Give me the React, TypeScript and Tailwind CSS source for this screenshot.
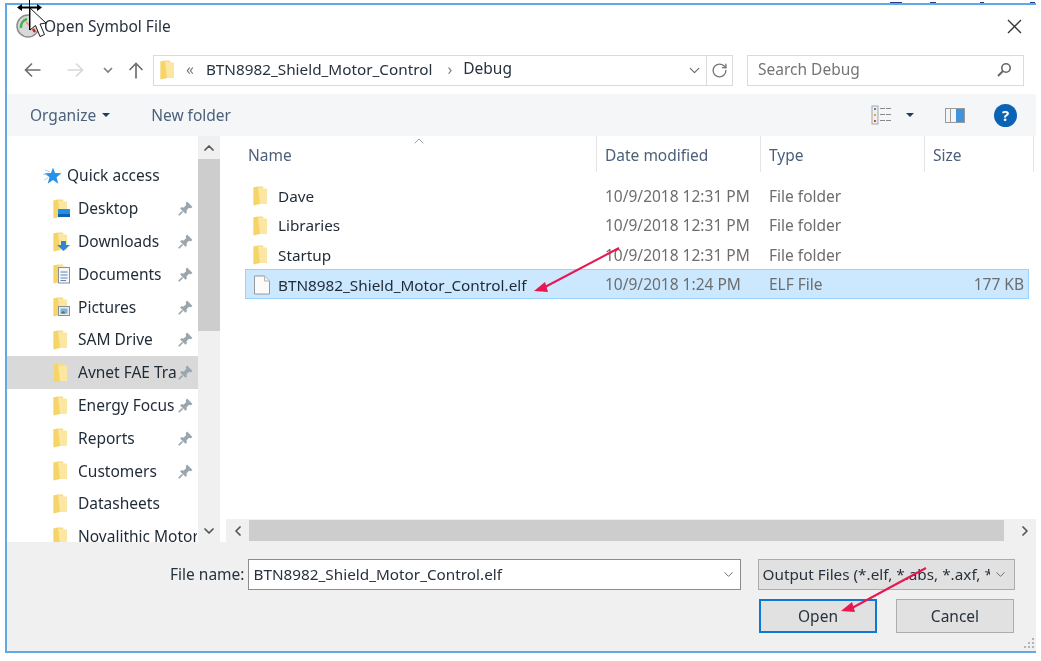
import React from "react";
import { ChevronDown, ChevronUp, ChevronLeft, ChevronRight, RotateCw } from "lucide-react";

function Folder({ overlay }: { overlay?: React.ReactNode }) {
  return (
    <svg width="20" height="20" viewBox="0 0 20 20" className="shrink-0">
      <path d="M0.5 1.5 L5 0.5 L5.5 2.5 L14 2.5 L14 18 L1.5 18 L0.5 19.5 Z" fill="#fbe6a2" />
      <path d="M0.5 1.5 L5 0.5 L7 18 L0.5 19.5 Z" fill="#f5d469" />
      <path d="M5 0.5 L10 0.5 L10.5 2.5 L5.4 2.5 Z" fill="#f7dc85" />
      {overlay}
    </svg>
  );
}

const desktop = (
  <g>
    <rect x="5" y="10" width="12" height="8" rx="0.5" fill="#1f8fe8" />
    <rect x="5" y="15" width="12" height="3" fill="#0d62b0" />
  </g>
);
const downloads = <path d="M8 9 H13 V13 H17 L10.5 19 L4 13 H8 Z" fill="#2e86dc" />;
const documents = (
  <g>
    <rect x="5.5" y="3.5" width="11" height="15.5" fill="#f5f7fa" stroke="#8b8f94" />
    <path d="M7.5 8 H14.5 M7.5 11 H14.5 M7.5 14 H14.5 M7.5 16.5 H13" stroke="#5a87b5" strokeWidth="1" />
  </g>
);
const pictures = (
  <g>
    <rect x="5.5" y="9.5" width="11" height="9" fill="#e9edf0" stroke="#8b8f94" />
    <rect x="7.5" y="11.5" width="7" height="5" fill="#7fb2d9" />
    <path d="M7.5 16.5 L10 14 L13 16.5 Z" fill="#4f7b50" />
  </g>
);

function Pin() {
  return (
    <svg width="15" height="15" viewBox="0 0 14 14" className="shrink-0">
      <path d="M8.5 0.5 L13.5 5.5 L12 6.8 L10.3 6.3 L8 8.6 L8.2 11 L7 12 L2 7 L3 5.8 L5.4 6 L7.7 3.7 L7.2 2 Z" fill="#9aa5ad" />
      <path d="M4.2 9.8 L0.7 13.3" stroke="#9aa5ad" strokeWidth="1.6" />
    </svg>
  );
}

function NavRow({ label, pin, active, overlay }: { label: string; pin?: boolean; active?: boolean; overlay?: React.ReactNode }) {
  return (
    <div className={`flex h-[32.8px] shrink-0 items-center pl-[46px] ${active ? "bg-[#d9d9d9]" : ""}`}>
      <Folder overlay={overlay} />
      <span className={`ml-[5px] overflow-hidden whitespace-nowrap text-[#1f2a36] ${pin ? "w-[98px]" : "w-[119px]"}`}>{label}</span>
      {pin && <span className="ml-[2px] flex"><Pin /></span>}
    </div>
  );
}

function FileRow({ name, date, type, size, selected, file }: { name: string; date: string; type: string; size?: string; selected?: boolean; file?: boolean }) {
  return (
    <div className={`flex w-[784px] items-center border pl-[7px] pt-[2px] ${selected ? "h-[30px] border-[#99d1ff] bg-[#cce8ff]" : "h-[29.5px] border-transparent"}`}>
      {file ? (
        <svg width="20" height="20" viewBox="0 0 20 20" className="shrink-0">
          <path d="M1.5 1 H11.5 L16.5 6 V19 H1.5 Z" fill="#fbfbfb" stroke="#9a9a9a" />
          <path d="M11.5 1 V6 H16.5" fill="#eeeeee" stroke="#b5b5b5" />
        </svg>
      ) : (
        <Folder />
      )}
      <span className="ml-[5px] w-[327px] whitespace-nowrap text-[15.3px] text-[#1f2a36]">{name}</span>
      <span className="w-[164px] whitespace-nowrap text-[#6d6d6d]">{date}</span>
      <span className="w-[130px] whitespace-nowrap text-[#6d6d6d]">{type}</span>
      <span className="w-[129px] whitespace-nowrap pr-[4px] text-right text-[#6d6d6d]">{size}</span>
    </div>
  );
}

function Header({ label, w, first }: { label: string; w: string; first?: boolean }) {
  return (
    <div className={`h-[36px] shrink-0 border-r border-[#e5e5e5] pt-[7px] leading-[24px] text-[#4c607a] ${first ? "pl-[7px]" : "pl-[8px]"} ${w}`}>{label}</div>
  );
}

export default function App() {
  return (
    <div className="relative h-[661px] w-[1041px] overflow-hidden bg-white pl-[5px] pt-[3px] text-[15.5px] blur-[0.35px]" style={{ fontFamily: '"Noto Sans", "Open Sans", sans-serif' }}>
      {/* window edges peeking out behind the dialog */}
      <div className="absolute left-[890px] top-[2px] h-[2px] w-[12px] bg-[#1f3f8f]" />
      <div className="absolute left-[930px] top-[2px] h-[2px] w-[6px] bg-[#1f3f8f]" />
      <div className="absolute left-[980px] top-[2px] h-[2px] w-[4px] bg-[#1f3f8f]" />
      <div className="absolute left-[1030px] top-[2px] h-[2px] w-[5px] bg-[#1f3f8f]" />

      <div className="relative flex h-[650px] w-[1031px] flex-col border-y-2 border-l-2 border-[#62a8e5] bg-white">
        {/* title */}
        <div className="flex h-[41px] shrink-0 items-center pl-[9px] pt-[1px]">
          <svg width="24" height="24" viewBox="0 0 24 24" className="shrink-0">
            <circle cx="12" cy="12" r="11" fill="#d9d9d9" stroke="#8c8c8c" strokeWidth="1.5" />
            <path d="M5 14 A8 8 0 0 1 11 5" fill="none" stroke="#43b649" strokeWidth="2.5" />
            <path d="M14 6 A8 8 0 0 1 19 10" fill="none" stroke="#e8e8e8" strokeWidth="2.5" />
            <path d="M10 8 L15 13" stroke="#e78b8b" strokeWidth="1.5" />
            <path d="M17 15 L19 18" stroke="#c22" strokeWidth="2.5" />
          </svg>
          <span className="ml-[4px] pt-[2px] text-[#27323e]">Open Symbol File</span>
          <svg width="15" height="15" viewBox="0 0 15 15" className="ml-auto mr-[14px]">
            <path d="M1 1 L14 14 M14 1 L1 14" stroke="#333" strokeWidth="1.3" />
          </svg>
        </div>

        {/* nav */}
        <div className="flex h-[48px] shrink-0 items-center pl-[17px]">
          <svg width="17" height="16" viewBox="0 0 17 16" className="shrink-0">
            <path d="M16.5 8 H1.5 M8 1.5 L1.5 8 L8 14.5" fill="none" stroke="#707070" strokeWidth="1.7" />
          </svg>
          <svg width="17" height="16" viewBox="0 0 17 16" className="ml-[26px] shrink-0">
            <path d="M0.5 8 H15.5 M9 1.5 L15.5 8 L9 14.5" fill="none" stroke="#d9d9d9" strokeWidth="1.7" />
          </svg>
          <svg width="10" height="7" viewBox="0 0 10 7" className="ml-[19px] shrink-0">
            <path d="M1 1 L5 5 L9 1" fill="none" stroke="#808080" strokeWidth="1.7" />
          </svg>
          <svg width="16" height="17" viewBox="0 0 16 17" className="ml-[15px] shrink-0">
            <path d="M8 16.5 V1.5 M1.5 8 L8 1.5 L14.5 8" fill="none" stroke="#707070" strokeWidth="1.7" />
          </svg>
          <div className="ml-[9px] flex h-[31px] w-[580px] shrink-0 items-center border border-[#dadada]">
            <div className="ml-[6px] flex"><Folder /></div>
            <span className="ml-[6px] text-[#7a7a7a]">«</span>
            <span className="ml-[12px] pb-[2px] text-[15.3px] text-[#27323e]">BTN8982_Shield_Motor_Control</span>
            <span className="ml-[15px] text-[#7a7a7a]">›</span>
            <span className="ml-[11px] pb-[2px] text-[#27323e]">Debug</span>
            <ChevronDown size={17} strokeWidth={1.6} className="ml-auto mr-[3px] text-[#666]" />
            <div className="flex h-full w-[26px] items-center justify-center border-l border-[#dadada]">
              <RotateCw size={17} strokeWidth={1.9} className="text-[#777]" />
            </div>
          </div>
          <div className="ml-[14px] flex h-[31px] w-[277px] shrink-0 items-center border border-[#dadada] pl-[10px] pr-[11px] text-[#757575]">
            Search Debug
            <svg width="16" height="16" viewBox="0 0 16 16" className="ml-auto">
              <circle cx="10" cy="6" r="4.2" fill="none" stroke="#666" strokeWidth="1.6" />
              <path d="M7 9 L2 14" stroke="#666" strokeWidth="2" />
            </svg>
          </div>
        </div>

        {/* toolbar */}
        <div className="flex h-[42px] shrink-0 items-center bg-[#f4f6f8] pl-[23px] text-[#4c607a]">
          <span className="pt-[2px]">Organize</span>
          <span className="ml-[6px] h-0 w-0 border-x-[4px] border-t-[4px] border-x-transparent border-t-[#1e3a5f]" />
          <span className="ml-[41px] pt-[2px]">New folder</span>
          <svg width="22" height="20" viewBox="0 0 22 20" className="ml-auto">
            <rect x="1" y="1" width="6" height="18" fill="#f0f0f0" stroke="#a6a6a6" />
            <rect x="3" y="3" width="2" height="2" fill="#4f86c6" />
            <rect x="3" y="9" width="2" height="2" fill="#c9b23a" />
            <rect x="3" y="15" width="2" height="2" fill="#d0502c" />
            <path d="M9 3.5 H21 M9 9.5 H21 M9 15.5 H21" stroke="#8a8a8a" strokeDasharray="5 1" />
          </svg>
          <span className="ml-[13px] h-0 w-0 border-x-[4px] border-t-[4px] border-x-transparent border-t-[#1e3a5f]" />
          <svg width="20" height="15" viewBox="0 0 20 15" className="ml-[31px]">
            <rect x="0.5" y="0.5" width="19" height="14" fill="#f5f5f5" stroke="#9a9a9a" />
            <rect x="11" y="1" width="8" height="13" fill="#3f94dd" />
            <rect x="5" y="1" width="1" height="13" fill="#9a9a9a" />
          </svg>
          <div className="ml-[29px] mr-[19px] flex h-[23px] w-[23px] items-center justify-center rounded-full bg-[#0a63b5] text-[15px] font-bold text-white">?</div>
        </div>

        {/* main */}
        <div className="flex min-h-0 flex-1">
          {/* sidebar */}
          <div className="w-[191px] shrink-0 overflow-hidden">
            <div className="flex h-[56.4px] items-start pl-[35px] pt-[28px]">
              <svg width="20" height="18" viewBox="0 0 20 18" className="mt-[3px] shrink-0">
                <path d="M11 0.5 L13 6 L19.5 6.3 L14.5 10.3 L16.3 16.8 L11 13 L5.7 16.8 L7.5 10.3 L2.5 6.3 L9 6 Z" fill="#2b90e8" />
                <path d="M3 3 L8 5 M1 7 L5 8 M2 13 L6 11" stroke="#a8d4f5" strokeWidth="1" />
              </svg>
              <span className="ml-[5px] text-[#1f2a36]">Quick access</span>
            </div>
            <NavRow label="Desktop" pin overlay={desktop} />
            <NavRow label="Downloads" pin overlay={downloads} />
            <NavRow label="Documents" pin overlay={documents} />
            <NavRow label="Pictures" pin overlay={pictures} />
            <NavRow label="SAM Drive" pin />
            <NavRow label="Avnet FAE Training" pin active />
            <NavRow label="Energy Focus" pin />
            <NavRow label="Reports" pin />
            <NavRow label="Customers" pin />
            <NavRow label="Datasheets" />
            <NavRow label="Novalithic Motor Control" />
          </div>
          {/* sidebar scroll */}
          <div className="flex h-full w-[22px] shrink-0 flex-col bg-[#f0f0f0]">
            <div className="flex h-[23px] items-center justify-center"><ChevronUp size={16} strokeWidth={2.6} className="text-[#555]" /></div>
            <div className="h-[172px] bg-[#cdcdcd]" />
            <div className="flex-1" />
            <div className="flex h-[23px] items-center justify-center"><ChevronDown size={16} strokeWidth={2.6} className="text-[#555]" /></div>
          </div>
          {/* file list */}
          <div className="relative flex min-w-0 flex-1 flex-col">
            <ChevronUp size={16} strokeWidth={1.2} className="absolute left-[191px] top-[-3px] text-[#888]" />
            <div className="flex shrink-0 pl-[21px]">
              <Header label="Name" w="w-[356px]" first />
              <Header label="Date modified" w="w-[164px]" />
              <Header label="Type" w="w-[164px]" />
              <Header label="Size" w="w-[109px]" />
            </div>
            <div className="flex-1 pl-[25px] pt-[8.5px]">
              <FileRow name="Dave" date="10/9/2018 12:31 PM" type="File folder" />
              <FileRow name="Libraries" date="10/9/2018 12:31 PM" type="File folder" />
              <FileRow name="Startup" date="10/9/2018 12:31 PM" type="File folder" />
              <FileRow name="BTN8982_Shield_Motor_Control.elf" date="10/9/2018 1:24 PM" type="ELF File" size="177 KB" selected file />
            </div>
            <div className="ml-[6px] flex h-[23px] shrink-0 items-center bg-[#f0f0f0]">
              <div className="flex w-[23px] shrink-0 justify-center"><ChevronLeft size={16} strokeWidth={2.6} className="text-[#555]" /></div>
              <div className="h-[21px] w-[755px] shrink-0 bg-[#cdcdcd]" />
              <div className="flex w-[32px] shrink-0 justify-center pl-[10px]"><ChevronRight size={16} strokeWidth={2.6} className="text-[#555]" /></div>
            </div>
          </div>
        </div>

        {/* bottom */}
        <div className="flex h-[109px] shrink-0 flex-col bg-[#f0f0f0] pt-[17px]">
          <div className="flex items-center">
            <span className="ml-[163px] text-[#27323e]">File name:</span>
            <div className="ml-[4px] flex h-[31px] w-[493px] shrink-0 items-center border border-[#8c8c8c] bg-white pl-[4px] text-[15.3px] text-[#27323e]">
              BTN8982_Shield_Motor_Control.elf
              <ChevronDown size={15} strokeWidth={1.5} className="ml-auto mr-[4px] text-[#666]" />
            </div>
            <div className="ml-[17px] flex h-[31px] w-[257px] shrink-0 items-center border border-[#acacac] bg-[#e1e1e1] pl-[3px] text-[15.3px] text-[#27323e]">
              <span className="w-[228px] overflow-hidden whitespace-nowrap">Output Files (*.elf, *.abs, *.axf, *.out)</span>
              <ChevronDown size={15} strokeWidth={1.5} className="ml-[3px] text-[#666]" />
            </div>
          </div>
          <div className="ml-[752px] mt-[9px] flex gap-[19px]">
            <div className="flex h-[34px] w-[118px] items-center justify-center border-2 border-[#0f78d4] bg-[#e1e1e1] pt-[2px] text-[#27323e]">Open</div>
            <div className="flex h-[34px] w-[118px] items-center justify-center border border-[#adadad] bg-[#e1e1e1] pt-[2px] text-[#27323e]">Cancel</div>
          </div>
        </div>

        {/* resize grip */}
        <svg width="12" height="12" viewBox="0 0 12 12" className="absolute bottom-[2px] right-[1px]">
          <path d="M9 1h2v2H9zM5 5h2v2H5zM9 5h2v2H9zM1 9h2v2H1zM5 9h2v2H5zM9 9h2v2H9z" fill="#b5b5b5" />
        </svg>
      </div>

      {/* annotation arrows */}
      <svg width="1041" height="661" viewBox="0 0 1041 661" className="pointer-events-none absolute left-0 top-0">
        <path d="M619 248 L545 287" stroke="#e8174f" strokeWidth="2" />
        <path d="M534 291 L545 282 L548 292 Z" fill="#e8174f" />
        <path d="M926 568 L852 608" stroke="#e8174f" strokeWidth="2" />
        <path d="M841 611 L852 602 L855 612 Z" fill="#e8174f" />
      </svg>

      {/* cursors */}
      <svg width="50" height="40" viewBox="0 0 50 40" className="pointer-events-none absolute left-0 top-0">
        <path d="M29.5 0 V30" stroke="#000" strokeWidth="1" />
        <path d="M17 7.5 L22 4 V6.5 H37 V4 L42 7.5 L37 11 V8.5 H22 V11 Z" fill="#000" />
        <path d="M30 8 L30 30 L35.5 25.5 L40 36.5 L44.5 34.5 L40 24 L46 23 Z" fill="#fff" stroke="#000" strokeWidth="0.9" />
      </svg>
    </div>
  );
}
